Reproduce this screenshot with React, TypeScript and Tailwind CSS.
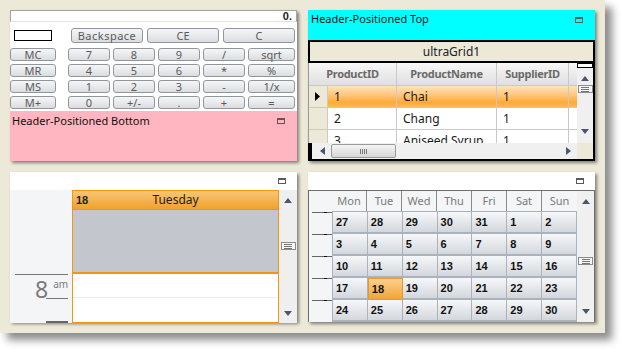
import type { ReactNode } from "react";

const UI = "font-['Noto_Sans','Open_Sans',sans-serif]";

function MinIcon() {
  return <span className="block h-[6px] w-[8px] border border-t-2 border-[#5a5a5a]" />;
}

function UpArrow() {
  return (
    <svg width="8" height="5" viewBox="0 0 8 5" className="block">
      <path d="M0 5 L4 0 L8 5 Z" fill="#4a5670" />
    </svg>
  );
}

function DownArrow() {
  return (
    <svg width="8" height="5" viewBox="0 0 8 5" className="block">
      <path d="M0 0 L8 0 L4 5 Z" fill="#4a5670" />
    </svg>
  );
}

function Thumb() {
  return (
    <span className="flex h-[8px] w-[15px] flex-col items-center justify-center gap-[1px] border border-[#8c8c8c] bg-[#f6f6f6]">
      <span className="block h-px w-[8px] bg-[#777]" />
      <span className="block h-px w-[8px] bg-[#777]" />
      <span className="block h-px w-[8px] bg-[#777]" />
    </span>
  );
}

function CalcBtn({ label, className = "" }: { label: string; className?: string }) {
  return (
    <div
      className={`flex items-center justify-center rounded-[3px] border border-[#8f969d] bg-[linear-gradient(#f5f6f7,#dadde0)] text-[11px] leading-none text-[#5a5a5a] ${className}`}
    >
      {label}
    </div>
  );
}

function Calculator() {
  const rows = [
    ["MC", "7", "8", "9", "/", "sqrt"],
    ["MR", "4", "5", "6", "*", "%"],
    ["MS", "1", "2", "3", "-", "1/x"],
    ["M+", "0", "+/-", ".", "+", "="],
  ];
  return (
    <div className="flex h-[151px] w-[287px] flex-col bg-white shadow-[2px_2px_3px_rgba(0,0,0,0.45)]">
      <div className="flex h-[12px] items-center justify-end border border-[#a7a69a] border-b-[#e6e4da] pr-[4px] font-['Liberation_Sans',sans-serif] text-[11px] font-bold leading-none text-[#222]">
        0.
      </div>
      <div className="mt-[6px] flex h-[15px] items-center">
        <div className="ml-[4px] h-[11px] w-[38px] border border-black" />
        <CalcBtn label="Backspace" className="ml-[19px] h-[15px] w-[72px] tracking-[0.5px]" />
        <CalcBtn label="CE" className="ml-[4px] h-[15px] w-[72px]" />
        <CalcBtn label="C" className="ml-[4px] h-[15px] w-[72px]" />
      </div>
      <div className="mt-[5px] grid auto-rows-[13px] grid-cols-[55px_42px_42px_42px_42px_47px] gap-x-[3px] gap-y-[3px]">
        {rows.map((r) =>
          r.map((k, i) => (
            <CalcBtn key={r[0] + k} label={k} className={i === 0 ? "w-[46px]" : ""} />
          )),
        )}
      </div>
      <div className="mt-auto flex h-[50px] items-start justify-between bg-[#ffb6c1] pl-[2px] pr-[12px] pt-[2px]">
        <span className={`${UI} text-[11px] leading-[16px] text-[#111]`}>Header-Positioned Bottom</span>
        <span className="mt-[5px]">
          <MinIcon />
        </span>
      </div>
    </div>
  );
}

const COLS = ["w-[69px]", "w-[100px]", "w-[72px]"];
const SEL_BG = "bg-[linear-gradient(#ffe3ba,#ffc47a_45%,#ffab36_78%,#ffba55)]";

function GridRow({ cells, selected }: { cells: string[]; selected?: boolean }) {
  return (
    <div className="flex h-[22px] shrink-0">
      <div className="flex w-[20px] items-center justify-center border-b border-r border-[#cfcbb8] bg-[#ece9d8]">
        {selected && (
          <svg width="5" height="9" viewBox="0 0 5 9">
            <path d="M0 0 L5 4.5 L0 9 Z" fill="#000" />
          </svg>
        )}
      </div>
      {cells.map((c, i) => (
        <div
          key={i}
          className={`${COLS[i]} flex items-center border-b border-r border-[#c9c9c9] pl-[6px] text-[12px] text-[#1a1a1a] ${
            selected ? SEL_BG : "bg-white"
          }`}
        >
          {c}
        </div>
      ))}
      <div className={`w-[8px] border-b border-[#c9c9c9] ${selected ? SEL_BG : "bg-white"}`} />
    </div>
  );
}

function GridPanel() {
  return (
    <div className={`${UI} flex h-[151px] w-[287px] flex-col shadow-[2px_2px_3px_rgba(0,0,0,0.45)]`}>
      <div className="flex h-[30px] items-start justify-between bg-[#00ffff] pl-[3px] pr-[12px] pt-[1px]">
        <span className="text-[11px] leading-[16px] text-[#111]">Header-Positioned Top</span>
        <span className="mt-[6px]">
          <MinIcon />
        </span>
      </div>
      <div className="flex flex-1 flex-col overflow-hidden border-b-2 border-r-2 border-t-2 border-black bg-white">
        <div className="flex h-[21px] shrink-0 items-center justify-center border-b-2 border-l-2 border-black bg-[#ece9d8] text-[12px] text-[#222]">
          ultraGrid1
        </div>
        <div className="flex h-[80px] shrink-0">
          <div className="flex w-[269px] flex-col overflow-hidden border-l border-[#9a9a9a]">
            <div className="flex h-[23px] shrink-0 bg-[linear-gradient(#f8f8f8,#dedede)] text-[11px] font-bold text-[#6a6a6a]">
              <div className="flex w-[88px] items-center justify-center border-b border-r border-[#c9c9c9] tracking-[-0.3px]">ProductID</div>
              <div className="flex w-[100px] items-center justify-center border-b border-r border-[#c9c9c9] tracking-[-0.3px]">ProductName</div>
              <div className="flex w-[72px] items-center justify-center border-b border-r border-[#c9c9c9] tracking-[-0.3px]">SupplierID</div>
              <div className="w-[8px] border-b border-[#c9c9c9]" />
            </div>
            <div className="-ml-px">
              <GridRow cells={["1", "Chai", "1"]} selected />
              <GridRow cells={["2", "Chang", "1"]} />
              <GridRow cells={["3", "Aniseed Syrup", "1"]} />
            </div>
          </div>
          <div className="flex w-[16px] flex-col items-center bg-[#f0f0f0]">
            <div className="h-[5px] w-[16px] border border-black bg-white" />
            <div className="mt-[8px]">
              <UpArrow />
            </div>
            <div className="mt-[4px]">
              <Thumb />
            </div>
            <div className="mt-auto mb-[9px]">
              <DownArrow />
            </div>
          </div>
        </div>
        <div className="flex h-[16px] shrink-0 items-center">
          <div className="h-[16px] w-[4px] border-2 border-black" />
          <div className="flex h-[16px] w-[265px] items-center bg-[#f0f0f0]">
            <svg width="5" height="8" viewBox="0 0 5 8" className="ml-[8px]">
              <path d="M5 0 L0 4 L5 8 Z" fill="#4a5670" />
            </svg>
            <div className="ml-[6px] flex h-[14px] w-[65px] items-center justify-center gap-[1px] rounded-[2px] border border-[#9a9a9a] bg-[linear-gradient(#f4f4f4,#d6d6d6)]">
              <span className="h-[5px] w-px bg-[#777]" />
              <span className="h-[5px] w-px bg-[#777]" />
              <span className="h-[5px] w-px bg-[#777]" />
              <span className="h-[5px] w-px bg-[#777]" />
            </div>
            <svg width="5" height="8" viewBox="0 0 5 8" className="ml-auto mr-[6px]">
              <path d="M0 0 L5 4 L0 8 Z" fill="#4a5670" />
            </svg>
          </div>
          <div className="h-[16px] flex-1 bg-[#ece9d8]" />
        </div>
      </div>
    </div>
  );
}

function DayView() {
  return (
    <div className={`${UI} flex h-[150px] w-[287px] flex-col bg-white shadow-[2px_2px_3px_rgba(0,0,0,0.45)]`}>
      <div className="flex h-[18px] shrink-0 items-center justify-end pr-[11px]">
        <MinIcon />
      </div>
      <div className="flex flex-1">
        <div className="flex w-[62px] flex-col bg-[#f4f5f7]">
          <div className="h-[84px]" />
          <div className="ml-[5px] h-px w-[53px] bg-[#777]" />
          <div className="flex h-[23px] items-start">
            <span className="ml-[25px] mt-[2px] text-[23px] leading-[24px] text-[#7a7a7a]">8</span>
            <span className="ml-[5px] mt-[4px] text-[10px] leading-none text-[#7a7a7a]">am</span>
          </div>
          <div className="ml-[36px] h-px w-[22px] bg-[#777]" />
          <div className="h-[22px]" />
          <div className="ml-[36px] h-[2px] w-[22px] bg-[#666]" />
        </div>
        <div className="flex w-[207px] flex-col border border-[#f0960f]">
          <div className="relative flex h-[18px] shrink-0 items-center justify-center bg-[linear-gradient(#f8c677,#f0a12c)] text-[12px] text-[#222]">
            <span className="absolute left-[3px] font-['Liberation_Sans',sans-serif] text-[11px] font-bold">18</span>
            Tuesday
          </div>
          <div className="h-px bg-[#f0960f]" />
          <div className="h-[62px] bg-[#c3c6cd]" />
          <div className="h-[2px] bg-[#f0960f]" />
          <div className="h-[24px] border-b border-[#ececec] bg-white" />
          <div className="flex-1 bg-white" />
        </div>
        <div className="flex w-[18px] flex-col items-center bg-[#efeff0]">
          <div className="mt-[8px]">
            <UpArrow />
          </div>
          <div className="mt-[39px]">
            <Thumb />
          </div>
          <div className="mt-auto mb-[7px]">
            <DownArrow />
          </div>
        </div>
      </div>
    </div>
  );
}

const WEEKS = [
  ["27", "28", "29", "30", "31", "1", "2"],
  ["3", "4", "5", "6", "7", "8", "9"],
  ["10", "11", "12", "13", "14", "15", "16"],
  ["17", "18", "19", "20", "21", "22", "23"],
  ["24", "25", "26", "27", "28", "29", "30"],
];
const DAYS = ["Mon", "Tue", "Wed", "Thu", "Fri", "Sat", "Sun"];

function MonthView() {
  return (
    <div className={`${UI} flex h-[150px] w-[287px] flex-col bg-white shadow-[2px_2px_3px_rgba(0,0,0,0.45)]`}>
      <div className="flex h-[18px] shrink-0 items-center justify-end pr-[11px]">
        <MinIcon />
      </div>
      <div className="flex flex-1 overflow-hidden border border-b-0 border-[#6e6e6e]">
        <div className="flex w-[23px] flex-col bg-[#f4f5f7]">
          <div className="h-[41px]" />
          {WEEKS.map((w) => (
            <div key={w[0]} className="flex h-[22px] shrink-0 flex-col justify-start">
              <div className="ml-[3px] h-px bg-[linear-gradient(90deg,#666_60%,#111_60%,#111_75%,#666_75%)]" />
            </div>
          ))}
        </div>
        <div className="flex w-[245px] flex-col bg-[#f4f5f7]">
          <div className="flex h-[20px] shrink-0">
            {DAYS.map((d, i) => (
              <div
                key={d}
                className={`flex w-[35px] items-center justify-center text-[11px] text-[#7a7a7a] ${i < 6 ? "border-r border-[#8a8a8a]" : ""}`}
              >
                {d}
              </div>
            ))}
          </div>
          <div className="border-l border-t border-[#a9b1bc]">
            {WEEKS.map((w) => (
              <div key={w[0] + w[6]} className="flex h-[22px]">
                {w.map((n, i) => {
                  const sel = n === "18" && i === 1;
                  return (
                    <div
                      key={i}
                      className={`flex w-[35px] items-center pl-[3px] pt-[1px] font-['Liberation_Sans',sans-serif] text-[11px] font-bold text-[#111] ${
                        sel
                          ? "border border-[#e39a2a] bg-[linear-gradient(#fbd08f,#f2a434)]"
                          : "border-b-2 border-r border-[#aab2bd] bg-[linear-gradient(#f6f7f9,#d3d7dc)]"
                      }`}
                    >
                      {n}
                    </div>
                  );
                })}
              </div>
            ))}
          </div>
        </div>
        <div className="flex w-[17px] flex-col items-center bg-[#f0f0f0]">
          <div className="mt-[8px]">
            <UpArrow />
          </div>
          <div className="mt-[53px]">
            <Thumb />
          </div>
          <div className="mt-auto mb-[8px]">
            <DownArrow />
          </div>
        </div>
      </div>
    </div>
  );
}

function Cell({ children }: { children: ReactNode }) {
  return <div className="flex">{children}</div>;
}

export default function App() {
  return (
    <div className="h-[349px] w-[621px] overflow-hidden bg-white">
      <div className="grid h-[333px] w-[605px] grid-cols-[287px_287px] grid-rows-[151px_150px] gap-[11px] bg-[#ece9d8] pl-[10px] pt-[10px] shadow-[7px_7px_8px_rgba(0,0,0,0.45)]">
        <Cell>
          <Calculator />
        </Cell>
        <Cell>
          <GridPanel />
        </Cell>
        <Cell>
          <DayView />
        </Cell>
        <Cell>
          <MonthView />
        </Cell>
      </div>
    </div>
  );
}
